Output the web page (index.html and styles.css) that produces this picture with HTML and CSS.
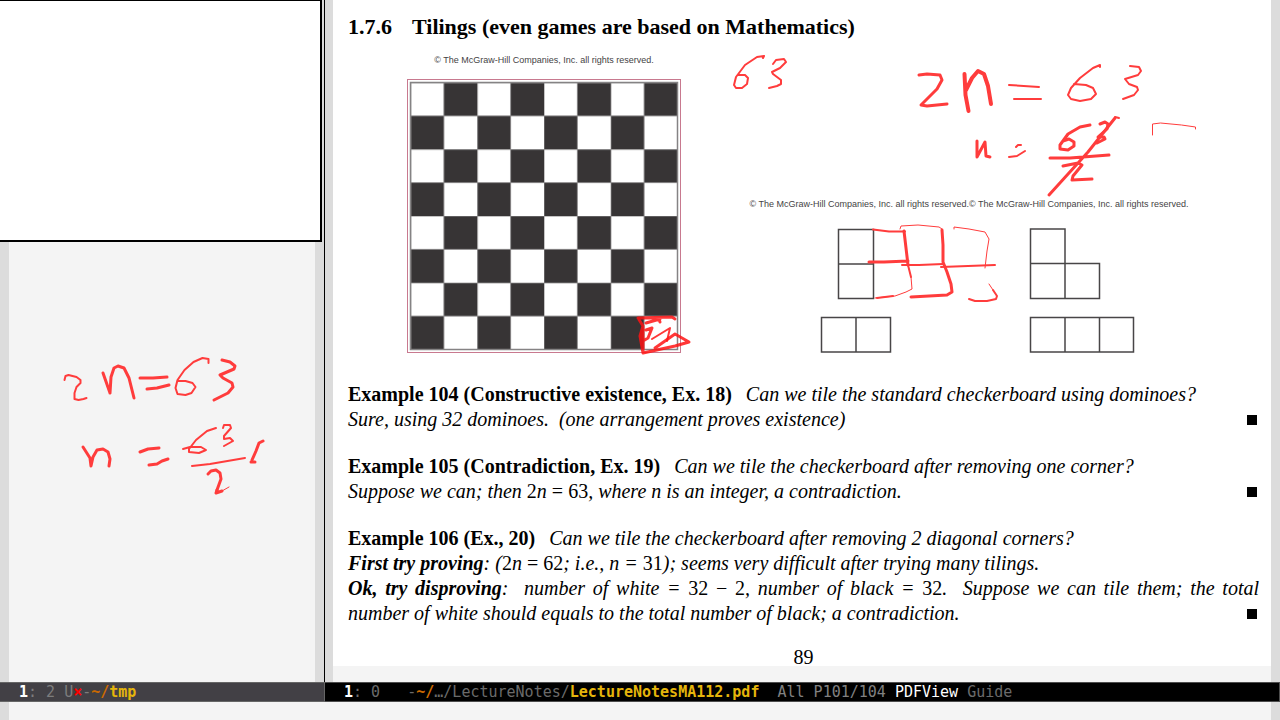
FILE: index.html
```html
<!DOCTYPE html>
<html lang="en">
<head>
<meta charset="utf-8">
<title>LectureNotesMA112.pdf</title>
<link rel="stylesheet" href="styles.css">
</head>
<body>
<div class="frame">
  <section class="window window-notes" aria-label="tmp">
    <div class="buffer">
      <div class="camera"></div>
      <svg class="ink" viewBox="0 0 324 682" aria-label="2n = 63, n = 63/2">
        <g class="pen">
          <path class="thin" d="M64.500 380l1-4 3-1 8 2 4 3 0 3-4 4-2 6 0 6 4 1 5-1 3-1"/>
          <path d="M103 373l7 20M110 393l1-16 3-9 4-2 6 2 5 10 5 20"/>
          <path d="M140 378l13 0 14-1M147 389l10-1 12-3"/>
          <path class="thin" d="M208.500 363l0-4-6-1-9 4-9 8-7 10-2 8 2 6 8 1 6-2 4-6-3-4-7-2-8 0"/>
          <path d="M222 360l8 2 5 4-1 3-14 6 3 3 9 5 1 4-5 6-8 4-6 3"/>
          <path d="M83 447l7 11 1 8 2-9 4-7 6-1 5 3 2 7-1 7"/>
          <path d="M140 452l8-3 11-1M149 465l8-1 5-3 6-2"/>
          <path class="thin" d="M216 428l-9 3-11 9-7 9 0 3 10 1 7-3-5-3-11 0-7 2"/>
          <path class="thin" d="M223 428l1-3 6 0 1 3-7 8 0 3 6-1 3 3-9 5"/>
          <path class="thin" d="M192 466l18-2 35-6"/>
          <path d="M208 474l3-3 5-1 4 3 1 6-4 11 0 2"/>
          <path d="M217 490l-1 3 6-2"/><path class="hair" d="M222 491l7-4"/>
          <path d="M263 441l-4 2-3 8-4 9M251 462l4 0"/>
        </g>
      </svg>
    </div>
    <footer class="modeline modeline-inactive"><b class="num">1</b>: 2 U<b class="mod">×</b>-<b class="dir">~/</b><b class="file">tmp</b></footer>
  </section>

  <section class="window window-pdf" aria-label="LectureNotesMA112.pdf">
    <div class="buffer">
      <article class="page">
        <h1 class="title"><span>1.7.6</span><span>Tilings (even games are based on Mathematics)</span></h1>
        <div class="figures">
          <figure class="figure figure-board">
            <figcaption class="credit">© The McGraw-Hill Companies, Inc. all rights reserved.</figcaption>
            <svg class="board" viewBox="0 0 274 274" role="img" aria-label="Checkerboard">
              <defs>
                <pattern id="squares" x="3.500" y="3.500" width="66.750" height="66.750" patternUnits="userSpaceOnUse">
                  <rect width="66.750" height="66.750" fill="#fff"/>
                  <path fill="#373435" d="M33.375 0h33.375v33.375h-66.750v33.375h33.375z"/>
                  <path fill="none" stroke="#8b898a" stroke-width="1" d="M33.375 0v66.750M0 33.375h66.750M0 0h66.750M0 0v66.750"/>
                </pattern>
              </defs>
              <rect x="0.500" y="0.500" width="273" height="273" fill="#fff" stroke="#c8798f"/>
              <rect x="3.500" y="3.500" width="267" height="267" fill="url(#squares)" stroke="#858384" stroke-width="1.500"/>
            </svg>
          </figure>
          <figure class="figure figure-tiles">
            <figcaption class="credit">© The McGraw-Hill Companies, Inc. all rights reserved.© The McGraw-Hill Companies, Inc. all rights reserved.</figcaption>
            <svg class="tiles" viewBox="741 222 456 131" role="img" aria-label="Dominoes and triominoes">
              <path d="M838.500 229.500h35v69h-35zM838.500 264h35M1030.500 229h34.500v69.500h-34.500zM1030.500 263.500h69v35h-34.500M821.500 317.500h69v34.500h-69zM856 317.500v34.500M1030.500 317.500h103v34.500h-103zM1065 317.500v34.500M1099.500 317.500v34.500"/>
            </svg>
          </figure>
        </div>
        <div class="examples">
          <p class="example"><b class="head">Example 104 (Constructive existence, Ex. 18)</b>Can we tile the standard checkerboard using dominoes?<br>Sure, using 32 dominoes. &nbsp;(one arrangement proves existence)<span class="qed"></span></p>
          <p class="example"><b class="head">Example 105 (Contradiction, Ex. 19)</b>Can we tile the checkerboard after removing one corner?<br>Suppose we can; then <span class="math">2<i>n</i> = 63</span>, where n is an integer, a contradiction.<span class="qed"></span></p>
          <p class="example"><b class="head">Example 106 (Ex., 20)</b>Can we tile the checkerboard after removing 2 diagonal corners?<br><b>First try proving</b>: (<span class="math">2<i>n</i> = 62</span>; i.e., n = <span class="math">31</span>); seems very difficult after trying many tilings.<br><b>Ok, try disproving</b>: &nbsp;number of white = <span class="math">32 − 2</span>, number of black = <span class="math">32</span>. &nbsp;Suppose we can tile them; the total number of white should equals to the total number of black; a contradiction.<span class="qed"></span></p>
        </div>
        <div class="folio">89</div>
      </article>
      <svg class="ink" viewBox="325 0 955 682" aria-label="Handwritten notes">
        <g class="pen">
          <path class="thin" d="M763 58l1-2-7 1-12 8-9 12-2 8 2 3 6 0 5-4 1-6-3-3-7 0"/>
          <path class="thin" d="M773 64l3-4 8-1 2 3-6 6-8 4 1 2 8 6 0 4-4 2-8 2"/>
          <path d="M919 75l8-1 13 1 2 5-5 9-16 16 6 1 20-2"/>
          <path class="thick" d="M964.500 74l1 21 3 16M966 90l6-12 6-7 6 3 4 12 3 18"/>
          <path class="thin" d="M1009 85l30 2M1014 99l27 0"/>
          <path class="thin" d="M1100 67l0-2-7 3-13 10-9 10-3 7 3 4 9 2 11-2 5-5-3-6-7-3-12-1"/>
          <path class="thin" d="M1130 66l9 1 2 4-3 4-13 4 4 5 8 3 1 3-4 5-11 4"/>
          <path d="M977 141l0 16 8-15 1 14 4 1"/><path class="thin" d="M1016 147l2-2 3 0M1009 157l8-1 8-5"/>
          <path d="M1090 125l-10 2-12 7-8 11 0 4 8 1 6-4 0-4-5-3-6 2M1100 124l5-2 3 2-1 5-9 8 6 0 1 2-8 4"/>
          <path d="M1050 158l20 0 39-3M1115 118l-27 34-39 43M1063 166l15-3 4 2-9 11-1 4 20-1"/>
          <path class="thin" d="M1119 118l-4-1"/>
          <path class="hair" d="M1152.500 135v-11l8-1 21 2 14 2v2"/>
          <path class="thin" d="M873 229.500l16 2 16 0"/>
          <path d="M904 231l4 34M869 262l15 0 24-1"/>
          <path class="thin" d="M908 265l3 12M902 265l17 0 24-1M941 267l54-2"/>
          <path class="hair" d="M911 277l1 12-6 3-11 4-20 2M900 229l1-3 17-1 21 2 3 2"/>
          <path d="M942 230l1 15 0 17 4 10 4 12 1 8-5 3-36 2"/>
          <path class="thin" d="M877 298l16-2"/>
          <path class="hair" d="M954 229l0-2 15 2 16 3 4 7-2 12-2 17M989 284l4 6"/>
          <path class="thin" d="M993 290l4 6-1 3-9 2-12 0-6-2"/>
        </g>
        <g class="pen pen-highlight">
          <path d="M638 318l34-1 3 2M638 318l5 8-3 10 3 17 32-7 14-4-14-8-20 14M646 323l14-4M660 322l-1-3M646 330l6-2-4 10-5 3M643 326l0 26"/>
          <path class="thin" d="M652 339l18-11-3 13"/>
        </g>
      </svg>
    </div>
    <footer class="modeline"><b class="num">1</b>: 0 &nbsp; -<b class="dir">~/</b>…/LectureNotes/<b class="file">LectureNotesMA112.pdf</b> &nbsp;<span class="pos">All P101/104</span> <span class="mode">PDFView</span> Guide</footer>
  </section>
  <div class="echo"></div>
</div>
</body>
</html>
```
FILE: styles.css
```css
* { box-sizing: border-box; }

body {
  margin: 0;
  background: #f4f4f4;
}

.frame {
  display: grid;
  grid-template-columns: minmax(0, 325fr) minmax(0, 955fr);
  grid-template-rows: 1fr 18px;
  min-height: 100vh;
}

.window {
  display: flex;
  flex-direction: column;
}

.window-notes { background: #000; }

.buffer {
  position: relative;
  flex: 1;
  background: #f4f4f4;
  border: solid #dcdcdc;
  border-width: 0 9px;
}

.window-notes .buffer { margin-right: 1px; }

.window-pdf .buffer { border-left-width: 8px; }

.camera {
  position: absolute;
  top: 0;
  left: -9px;
  right: -7px;
  height: 242px;
  background: #fff;
  border: solid #000;
  border-width: 1px 2px 2px 0;
}

.ink {
  position: absolute;
  top: 0;
  left: -9px;
  width: 324px;
  height: 682px;
  pointer-events: none;
}

.window-pdf .ink {
  left: -8px;
  width: 955px;
}

.pen {
  fill: none;
  stroke: #ff3c3c;
  stroke-width: 3;
  stroke-linecap: round;
  stroke-linejoin: round;
}

.pen .thin { stroke-width: 2; }
.pen .hair { stroke-width: 1; }
.pen .thick { stroke-width: 4; }

.pen-highlight {
  stroke: #ff1414;
  stroke-opacity: 0.85;
}

.page {
  min-height: 666px;
  padding: 14px 12px 0 15px;
  background: #fff;
  color: #000;
  font-family: "Liberation Serif", serif;
}

.title {
  display: flex;
  gap: 20px;
  margin: 0;
  font-size: 22px;
  line-height: 26px;
}

.figures {
  display: flex;
  gap: 60px;
  align-items: flex-end;
  margin-top: 12px;
  padding-left: 59px;
}

.figure {
  display: flex;
  flex-direction: column;
  align-items: center;
  margin: 0;
}

.figure-board {
  gap: 11px;
  width: 274px;
}

.figure-tiles {
  gap: 10px;
  width: 456px;
}

.credit {
  color: #454344;
  font-family: "Liberation Sans", Arial, sans-serif;
  font-size: 9px;
  line-height: 16px;
  white-space: nowrap;
}

.board,
.tiles {
  display: block;
  width: 100%;
}

.tiles path {
  fill: none;
  stroke: #484647;
  stroke-width: 1.5;
}

.examples {
  display: flex;
  flex-direction: column;
  gap: 22px;
  margin-top: 29px;
}

.example {
  margin: 0;
  font-size: 20px;
  font-style: italic;
  line-height: 25px;
  text-align: justify;
}

.head {
  margin-right: 14px;
  font-style: normal;
}

.math { font-style: normal; }
.math i { font-style: italic; }

.qed {
  float: right;
  width: 10px;
  height: 10px;
  margin: 8px 2px 0 0;
  background: #000;
}

.folio {
  margin-top: 22px;
  font-size: 20px;
  line-height: 18px;
  text-align: center;
}

.modeline {
  height: 20px;
  padding: 0 19px;
  overflow: hidden;
  border: 1px solid #4d4d4d;
  border-width: 1px 1px 1px 0;
  background: #000;
  color: #6b6b6b;
  font-family: "DejaVu Sans Mono", monospace;
  font-size: 15px;
  line-height: 18px;
  white-space: nowrap;
}

.modeline-inactive {
  border-color: #666;
  background: #424045;
  color: #7d7d7d;
}

.num,
.mode { color: #fff; }
.mod { color: #f00; }
.dir { color: #cc6a00; }
.file { color: #e5b50b; }
.pos { color: #808080; }

.echo {
  grid-column: 1 / -1;
  border: solid #dcdcdc;
  border-width: 0 9px;
}
```
